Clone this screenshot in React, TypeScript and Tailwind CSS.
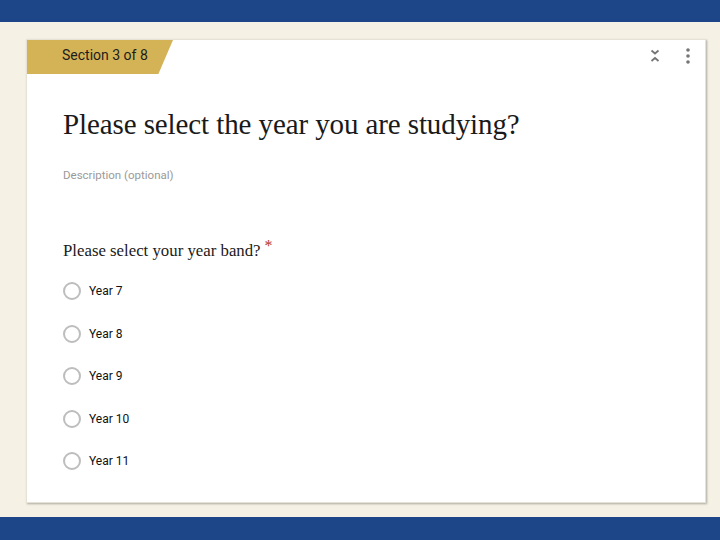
import React from "react";

const years = ["Year 7", "Year 8", "Year 9", "Year 10", "Year 11"];

export default function App() {
  return (
    <div className="w-[720px] h-[540px] flex flex-col bg-[#f5f1e5] overflow-hidden" style={{ fontFamily: "Roboto, 'Liberation Sans', sans-serif" }}>
      <div className="h-[22px] bg-[#1d4689] shrink-0" />
      <div className="flex-1 pt-[17px] pl-[26px]">
        <div className="relative w-[680px] h-[464px] bg-white shadow-[1px_1px_2px_rgba(0,0,0,0.3)] border border-[#e6e2d6]">
          <div className="flex items-start justify-between">
            <div className="h-[34px] w-[146px] bg-[#d4b356] flex items-center pl-[35px] pb-[3px] text-[14px] text-[#1c1c1c] [clip-path:polygon(0_0,100%_0,90%_100%,0_100%)]">
              Section 3 of 8
            </div>
            <div className="flex items-center gap-[24px] pt-[8px] pr-[14px]">
              <svg width="12" height="16" viewBox="0 0 12 16" fill="none" stroke="#757575" strokeWidth="1.8">
                <path d="M2.5 2.5 L6 5.5 L9.5 2.5" />
                <path d="M2.5 13 L6 10 L9.5 13" />
              </svg>
              <svg width="6" height="16" viewBox="0 0 6 16" fill="#757575">
                <circle cx="3" cy="2" r="1.8" />
                <circle cx="3" cy="8" r="1.8" />
                <circle cx="3" cy="14" r="1.8" />
              </svg>
            </div>
          </div>
          <div className="pl-[36px]">
            <div className="mt-[32px] text-[29px] leading-[36px] text-[#1a1a1a] tracking-[-0.1px]" style={{ fontFamily: "'Liberation Serif', serif" }}>
              Please select the year you are studying?
            </div>
            <div className="mt-[25px] text-[11.5px] text-[#9a9a9a]">Description (optional)</div>
            <div className="mt-[55px] flex items-start text-[16.8px] leading-[24px] text-[#1a1a1a]" style={{ fontFamily: "'Liberation Serif', serif" }}>
              Please select your year band?
              <span className="text-[#b8382c] text-[16px] leading-[14px] ml-[4px]">*</span>
            </div>
            <div className="mt-[19px] flex flex-col gap-[24.5px]">
              {years.map((y) => (
                <div key={y} className="flex items-center h-[18px]">
                  <div className="w-[18px] h-[18px] rounded-full border-2 border-[#bdbdbd]" />
                  <span className="ml-[8px] text-[12px] text-[#111]">{y}</span>
                </div>
              ))}
            </div>
          </div>
        </div>
      </div>
      <div className="h-[23px] bg-[#1d4689] shrink-0" />
    </div>
  );
}
